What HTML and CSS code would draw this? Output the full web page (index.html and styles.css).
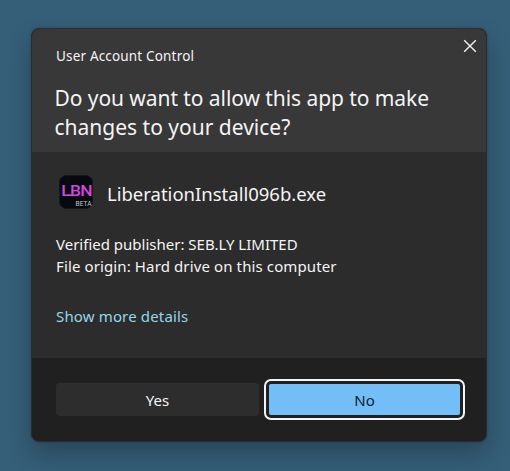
FILE: index.html
```html
<!DOCTYPE html>
<html lang="en">
<head>
<meta charset="utf-8">
<title>User Account Control</title>
<link rel="stylesheet" href="styles.css">
</head>
<body>
<main class="dialog">
  <header class="head">
    <div class="caption">User Account Control</div>
    <h1 class="question"><span class="lead">Do you want to allow this app to make</span><br>changes to your device?</h1>
    <button class="close" aria-label="Close">
      <svg width="14" height="14" viewBox="0 0 14 14"><path d="M1.2 1.2 12.8 12.8M12.8 1.2 1.2 12.8"/></svg>
    </button>
  </header>
  <section class="body">
    <div class="app">
      <svg class="logo" width="34" height="34" viewBox="0 0 34 34">
        <rect class="tile" x=".5" y=".5" width="33" height="33" rx="7"/>
        <text class="lbn" transform="translate(2.2 21) scale(1.12 1)">LBN</text>
        <path class="link" d="M9 20.3H14"/>
        <text class="beta" x="16.5" y="31" textLength="16" lengthAdjust="spacingAndGlyphs">BETA</text>
      </svg>
      <span class="name">LiberationInstall096b.exe</span>
    </div>
    <div class="facts">
      <div>Verified publisher: SEB.LY LIMITED</div>
      <div class="origin">File origin: Hard drive on this computer</div>
    </div>
    <a class="more">Show more details</a>
  </section>
  <footer class="foot">
    <button class="btn">Yes</button>
    <button class="btn primary">No</button>
  </footer>
</main>
</body>
</html>
```
FILE: styles.css
```css
* { box-sizing: border-box; }
body {
  margin: 0;
  width: 510px;
  height: 471px;
  overflow: hidden;
  padding: 28px 23px 29px 31px;
  background: #355e78;
  font-family: "Noto Sans", "Open Sans", sans-serif;
  color: #f4f4f4;
}
button { font: inherit; border: 0; padding: 0; }
.dialog {
  width: 456px;
  height: 414px;
  border: 1px solid #2b2c2d;
  border-radius: 8px;
  background: #202020;
  display: flex;
  flex-direction: column;
  overflow: hidden;
  box-shadow: 0 12px 24px rgba(0, 0, 0, .24), 0 0 3px rgba(0, 0, 0, .2);
}
.head {
  position: relative;
  height: 123px;
  padding: 17px 24px 0;
  background: #383838;
}
.caption { font-size: 13.5px; line-height: 20px; letter-spacing: .17px; white-space: nowrap; }
.question {
  margin: 18px 0 0 -1.5px;
  font-size: 21px;
  line-height: 29px;
  font-weight: 400;
  white-space: nowrap;
}
.lead { letter-spacing: -.07px; }
.close {
  position: absolute;
  top: 10px;
  right: 9px;
  width: 14px;
  height: 14px;
  background: none;
}
.close svg { display: block; fill: none; stroke: #f2f2f2; stroke-width: 1.4; }
.body {
  height: 206px;
  padding: 23px 24px 0;
  background: #2c2c2c;
}
.app { display: flex; align-items: center; gap: 15px; height: 34px; margin-left: 3px; }
.logo { display: block; flex: none; margin-left: -.5px; }
.tile { fill: #060a10; stroke: #10171d; }
.lbn { font: 500 14.5px Roboto, sans-serif; font-size: 15.5px; letter-spacing: -.6px; fill: #d246df; }
.link { stroke: #d246df; stroke-width: 1.4; }
.beta { font: 7.6px Roboto, sans-serif; fill: #c4c4c4; }
.name { font-size: 18.5px; line-height: 26px; padding-top: 4px; margin-left: -.5px; white-space: nowrap; }
.facts { margin-top: 24px; font-size: 15px; line-height: 22px; white-space: nowrap; }
.origin { letter-spacing: .12px; }
.more {
  display: block;
  margin-top: 28px;
  font-size: 15px;
  line-height: 22px;
  letter-spacing: .15px;
  color: #97d6e8;
}
.foot {
  display: grid;
  grid-template-columns: 203px 191px;
  column-gap: 10px;
  align-items: center;
  height: 83px;
  padding-left: 24px;
}
.btn {
  height: 33px;
  padding-top: 1px;
  border-radius: 4px;
  background: #2d2d2d;
  color: #f4f4f4;
  font-size: 15px;
  line-height: 32px;
}
.primary {
  height: 31px;
  border-radius: 2px;
  background: #74bef7;
  color: #10212e;
  line-height: 30px;
  outline: 2px solid #f4f4f4;
  outline-offset: 3px;
}
```
